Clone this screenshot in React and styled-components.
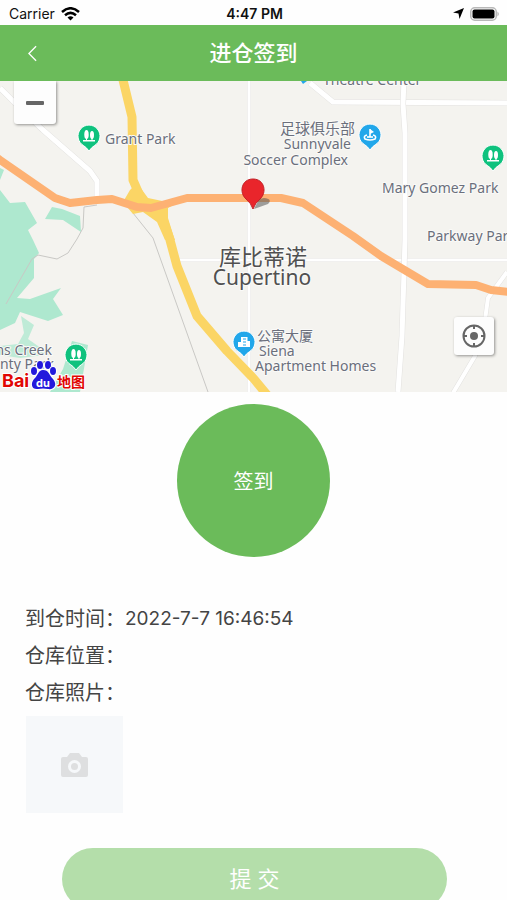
import React from "react";
import styled, { createGlobalStyle } from "styled-components";

const GREEN = "#6bbb5a";

const Global = createGlobalStyle`
  * { box-sizing: border-box; }
  html { scrollbar-width: none; }
  body {
    margin: 0;
    background: #fefefe;
    color: #444;
    font-family: Inter, "Noto Sans CJK SC", sans-serif;
  }
  button { font: inherit; border: 0; padding: 0; cursor: pointer; }
`;

const Page = styled.div`
  display: flex;
  flex-direction: column;
  min-height: 100vh;
`;

const StatusBar = styled.div`
  display: grid;
  grid-template-columns: 1fr auto 1fr;
  align-items: center;
  height: 25px;
  padding: 2px 7px 0 9px;
  color: #111;
  font-size: 14px;
  line-height: 20px;
`;

const StatusGroup = styled.div`
  display: flex;
  align-items: center;
  justify-content: ${(p) => (p.$end ? "flex-end" : "flex-start")};
  gap: 6px;
`;

const Time = styled.time`
  font-weight: 600;
`;

const Header = styled.header`
  display: grid;
  grid-template-columns: 64px 1fr 64px;
  align-items: center;
  height: 56px;
  background: ${GREEN};
  color: #fff;
`;

const BackButton = styled.button`
  display: flex;
  align-items: center;
  justify-content: center;
  height: 100%;
  background: none;
  color: inherit;
`;

const Title = styled.h1`
  margin: 0;
  text-align: center;
  font-size: 22px;
  line-height: 32px;
  font-weight: 500;
`;

const MapPanel = styled.section`
  position: relative;
  height: 311px;
  overflow: hidden;
  background: #f4f3ef;
`;

const MapDrawing = styled.svg`
  display: block;
  width: 100%;
  height: 100%;
`;

const LABEL_SIZES = { small: 14, medium: 15, city: 21, cityLocal: 22 };

const MapLabel = styled.text`
  font-family: "Noto Sans", "Noto Sans CJK SC", sans-serif;
  font-size: ${(p) => LABEL_SIZES[p.$size || "small"]}px;
  fill: ${(p) => (p.$dark ? "#505050" : "#6b6f7c")};
  stroke: #fafaf8;
  stroke-width: 2px;
  stroke-linejoin: round;
  paint-order: stroke;
  text-anchor: ${(p) => p.$anchor || "start"};
`;

const LogoText = styled.text`
  font-family: Inter, "Noto Sans CJK SC", sans-serif;
  font-size: ${(p) => p.$size}px;
  font-weight: 700;
  fill: ${(p) => p.$fill};
  stroke: ${(p) => (p.$outline ? "#fff" : "none")};
  stroke-width: 2px;
  paint-order: stroke;
`;

const MapButton = styled.button`
  position: absolute;
  display: flex;
  align-items: center;
  justify-content: center;
  background: #fdfdfd;
  box-shadow: 1px 1px 3px rgba(0, 0, 0, 0.4);
`;

const ZoomOut = styled(MapButton)`
  top: 0;
  left: 14px;
  width: 42px;
  height: 43px;
  border-radius: 0 0 3px 3px;
`;

const Locate = styled(MapButton)`
  right: 13px;
  bottom: 37px;
  width: 40px;
  height: 38px;
  border-radius: 3px;
`;

const CheckIn = styled.button`
  align-self: center;
  width: 153px;
  height: 153px;
  margin-top: 12px;
  border-radius: 50%;
  background: ${GREEN};
  color: #fff;
  font-size: 20px;
`;

const Details = styled.dl`
  display: flex;
  flex-direction: column;
  gap: 5px;
  margin: 46px 25px 0;
  font-size: 20px;
  line-height: 32px;
`;

const Row = styled.div`
  display: flex;
`;

const Term = styled.dt`
  flex: none;
`;

const Value = styled.dd`
  margin: 0;
  font-size: 19px;
`;

const PhotoButton = styled.button`
  display: flex;
  align-items: center;
  justify-content: center;
  width: 97px;
  height: 97px;
  margin: 7px 0 0 26px;
  background: #f6f8fa;
`;

const Submit = styled.button`
  height: 62px;
  margin: 35px 60px 0 62px;
  padding-bottom: 4px;
  border-radius: 31px;
  background: #b4deaa;
  color: #fff;
  font-size: 22px;
`;

const PIN = "M0 15 Q-3 11 -5.500 9.600 A11 11 0 1 1 5.500 9.600 Q3 11 0 15Z";

function Poi({ x, y, kind }) {
  return (
    <g transform={`translate(${x} ${y})`}>
      <path d={PIN} fill={kind === "park" ? "#0fc27e" : "#22a7ea"} stroke="#fff" strokeWidth="1" />
      {kind === "park" && (
        <g fill="#fff">
          <ellipse cx="-2.500" cy="-1.500" rx="2.200" ry="4.500" />
          <ellipse cx="3" cy="-1" rx="2" ry="4" />
          <path d="M-3 0h1v5h-1zM2.500 0h1v5h-1zM-6 4H6V5.500H-6z" />
        </g>
      )}
      {kind === "club" && (
        <g fill="none" stroke="#fff" strokeWidth="1.600">
          <path d="M-3 0Q-7 1 -5 4Q0 6 5 4Q7 1 3 0M0 2V-6" />
          <path d="M0 -6L4 -3L0 -1Z" fill="#fff" stroke="none" />
          <path d="M-3 2H3" />
        </g>
      )}
      {kind === "home" && (
        <g>
          <path d="M-6 5V0H-3V-5H3.500V-1H6V5Z" fill="#fff" />
          <path d="M-1 -3H2M-1 0H2M-1 3H2" stroke="#22a7ea" />
        </g>
      )}
    </g>
  );
}

function Road({ d, width = 5 }) {
  return (
    <>
      <path d={d} stroke="#e2e1df" strokeWidth={width + 1} />
      <path d={d} stroke="#fff" strokeWidth={width} />
    </>
  );
}

function CityMap() {
  return (
    <MapDrawing viewBox="0 81 507 311" preserveAspectRatio="xMidYMid slice" role="img" aria-label="Cupertino">
      <g fill="#aee8cf">
        <path d="M0 168L4 170L0 180ZM0 190L10 203L25 202L37 223L28 230L33 240L39 253L34 259L34 278L17 298L30 299L61 288L53 299L63 315L48 321L20 312L15 323L0 330Z" />
        <path d="M52 207L45 219L63 220L81 232L80 216L62 209Z" />
        <path d="M21 316L34 325L28 339L38 346L52 354L20 358L0 355L0 346L18 344L24 333Z" opacity=".75" />
        <path d="M72 341L88 345L80 392H50L63 369Z" />
      </g>
      <g fill="none" strokeLinejoin="round">
        <path d="M133 213L153 238L208 392M97 205L84 207L83 228L77 239L68 253L57 259L38 255L32 259L6 304" stroke="#c9c8c5" />
        <Road d="M0 88L20 108L43 130L90 171L97 181V203" />
        <Road d="M249 80V392" width={3} />
        <Road d="M178 260H507" width={3} />
        <Road d="M310 83L333 102L507 103" />
        <Road d="M404 80L403 104L405 133V240L402 336L398 392" />
        <Road d="M507 272L488 298L485 320L475 356L453 393" width={4} />
        <g stroke="#fbd565" strokeWidth="9">
          <path d="M123 80L132 117L133 180L143 203L163 217L170 240L177 266L197 316L227 351L254 379L268 396" />
          <path d="M130 190L137 183L148 198L167 202L187 198L168 208L168 220L175 240L165 240L157 222L143 212L133 214L123 202Z" fill="#fbd565" stroke="none" />
        </g>
        <path d="M-4 157L0 160L55 198L70 203L97 200L112 199L137 207L151 208L187 198L281 198L303 203L353 236L381 256L428 284L476 285L491 290L510 292" stroke="#fdb173" strokeWidth="8" />
      </g>

      <Poi x={89} y={136} kind="park" />
      <Poi x={370} y={135} kind="club" />
      <Poi x={493} y={156} kind="park" />
      <Poi x={76} y={355} kind="park" />
      <Poi x={244} y={342} kind="home" />

      <path d="M301 81L307 81L303 84Z" fill="#22a7ea" />
      <MapLabel x={323} y={85}>Theatre Center</MapLabel>
      <MapLabel x={105} y={144}>Grant Park</MapLabel>
      <MapLabel x={355} y={134} $anchor="end" $size="medium">足球俱乐部</MapLabel>
      <MapLabel x={351} y={149} $anchor="end">Sunnyvale</MapLabel>
      <MapLabel x={348} y={165} $anchor="end">Soccer Complex</MapLabel>
      <MapLabel x={382} y={193}>Mary Gomez Park</MapLabel>
      <MapLabel x={427} y={241}>Parkway Park</MapLabel>
      <MapLabel x={263} y={265} $anchor="middle" $size="cityLocal" $dark>库比蒂诺</MapLabel>
      <MapLabel x={262} y={285} $anchor="middle" $size="city" $dark>Cupertino</MapLabel>
      <MapLabel x={257} y={341}>公寓大厦</MapLabel>
      <MapLabel x={259} y={356}>Siena</MapLabel>
      <MapLabel x={255} y={371}>Apartment Homes</MapLabel>
      <MapLabel x={52} y={355} $anchor="end">Stevens Creek</MapLabel>
      <MapLabel x={54} y={369} $anchor="end">County Park</MapLabel>

      <path d="M254 209L268 204Q273 199 264 198L259 199Z" fill="#555" opacity=".55" />
      <path d="M253 209Q251 203 246 199C239 193 241 179 253 179C265 179 267 193 260 199Q255 203 253 209Z" fill="#e9252b" stroke="#c22127" />

      <LogoText x={2} y={387} $size={18} $fill="#e10602" $outline>Bai</LogoText>
      <g fill="#2319dc" stroke="#fff" strokeWidth="2" paintOrder="stroke">
        <ellipse cx="34" cy="371" rx="3" ry="4" />
        <ellipse cx="40" cy="365" rx="3" ry="4" />
        <ellipse cx="48" cy="365" rx="3" ry="4" />
        <ellipse cx="53" cy="371" rx="3" ry="4" />
        <path d="M43 370C49 370 49 375 53 379C58 385 54 390 48 389Q43 388 38 389C32 390 30 384 34 379C38 376 38 370 43 370Z" />
      </g>
      <LogoText x={36} y={387} $size={11} $fill="#fff">du</LogoText>
      <LogoText x={57} y={387} $size={14} $fill="#e10602" $outline>地图</LogoText>
    </MapDrawing>
  );
}

export default function App() {
  return (
    <Page lang="zh-CN">
      <Global />
      <StatusBar>
        <StatusGroup>
          <span>Carrier</span>
          <svg width="19" height="14" viewBox="0 0 19 14" aria-hidden="true" fill="none" stroke="#000" strokeWidth="2.500">
            <path d="M1 5Q9.500 -2.500 18 5M4 8.300Q9.500 3.500 15 8.300" />
            <path d="M9.500 13.500L6.500 10.500Q9.500 8 12.500 10.500Z" fill="#000" stroke="none" />
          </svg>
        </StatusGroup>
        <Time>4:47 PM</Time>
        <StatusGroup $end>
          <svg width="11" height="11" viewBox="0 0 11 11" aria-hidden="true">
            <path d="M11 0L6.500 11L5.500 5.500L0 4.500Z" />
          </svg>
          <svg width="30" height="14" viewBox="0 0 30 14" aria-hidden="true">
            <rect x=".75" y=".75" width="25.500" height="12.500" rx="4" fill="#fff" stroke="#b8b8b8" strokeWidth="1.500" />
            <rect x="2.500" y="2.500" width="22" height="9" rx="2" />
            <path d="M27.500 4.500Q30 7 27.500 9.500Z" fill="#aaa" />
          </svg>
        </StatusGroup>
      </StatusBar>

      <Header>
        <BackButton aria-label="返回">
          <svg width="9" height="17" viewBox="0 0 10 18" fill="none" stroke="currentColor" strokeWidth="1.500" aria-hidden="true">
            <path d="M9 1L1 9L9 17" />
          </svg>
        </BackButton>
        <Title>进仓签到</Title>
      </Header>

      <MapPanel>
        <CityMap />
        <ZoomOut aria-label="缩小">
          <svg width="18" height="4" viewBox="0 0 18 4" aria-hidden="true">
            <rect width="18" height="4" rx="1" fill="#666" />
          </svg>
        </ZoomOut>
        <Locate aria-label="定位">
          <svg width="24" height="24" viewBox="0 0 24 24" fill="none" stroke="#666" strokeWidth="2" aria-hidden="true">
            <circle cx="12" cy="12" r="10.500" />
            <circle cx="12" cy="12" r="4" fill="#666" stroke="none" />
            <path d="M12 1V5M12 19V23M1 12H5M19 12H23" />
          </svg>
        </Locate>
      </MapPanel>

      <CheckIn>签到</CheckIn>

      <Details>
        <Row>
          <Term>到仓时间：</Term>
          <Value>2022-7-7 16:46:54</Value>
        </Row>
        <Row>
          <Term>仓库位置：</Term>
          <Value />
        </Row>
        <Row>
          <Term>仓库照片：</Term>
          <Value />
        </Row>
      </Details>

      <PhotoButton aria-label="仓库照片">
        <svg width="27" height="24" viewBox="0 0 27 24" aria-hidden="true">
          <path d="M2 4H6L9 0H18L21 4H25Q27 4 27 6V22Q27 24 25 24H2Q0 24 0 22V6Q0 4 2 4Z" fill="#dedfe0" />
          <circle cx="13.500" cy="13.500" r="5" fill="none" stroke="#f6f8fa" strokeWidth="3" />
        </svg>
      </PhotoButton>

      <Submit>提 交</Submit>
    </Page>
  );
}
